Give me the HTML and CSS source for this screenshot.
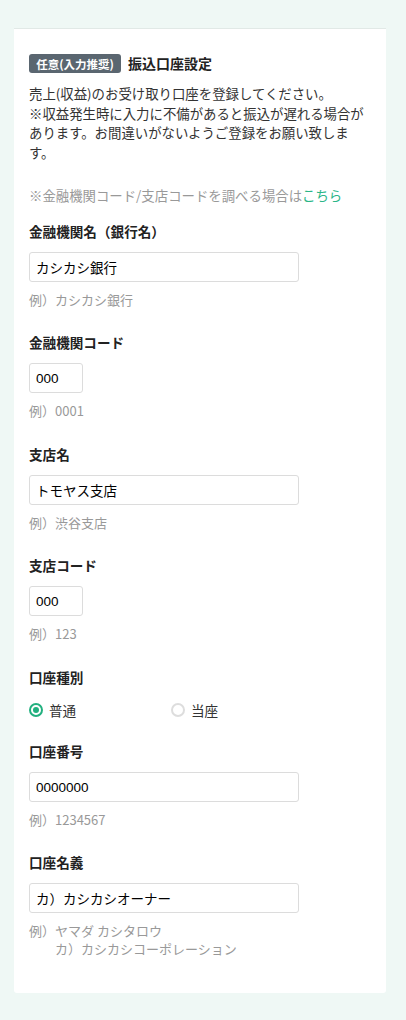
FILE: index.html
```html
<!DOCTYPE html>
<html lang="ja">
<head>
<meta charset="utf-8">
<title>振込口座設定</title>
<link rel="stylesheet" href="styles.css">
</head>
<body>
<div class="page">
  <section class="card">
    <div class="header">
      <span class="badge">任意(入力推奨)</span>
      <h2 class="title">振込口座設定</h2>
    </div>
    <p class="desc">売上(収益)のお受け取り口座を登録してください。<br>※収益発生時に入力に不備があると振込が遅れる場合があります。お間違いがないようご登録をお願い致します。</p>
    <p class="note">※金融機関コード/支店コードを調べる場合は<a class="link" href="#">こちら</a></p>

    <div class="field first">
      <div class="label">金融機関名（銀行名）</div>
      <input class="input wide" type="text" value="カシカシ銀行">
      <div class="hint">例）カシカシ銀行</div>
    </div>
    <div class="field">
      <div class="label">金融機関コード</div>
      <input class="input short" type="text" value="000">
      <div class="hint">例）0001</div>
    </div>
    <div class="field">
      <div class="label">支店名</div>
      <input class="input wide" type="text" value="トモヤス支店">
      <div class="hint">例）渋谷支店</div>
    </div>
    <div class="field">
      <div class="label">支店コード</div>
      <input class="input short" type="text" value="000">
      <div class="hint">例）123</div>
    </div>
    <div class="field radio-field">
      <div class="label">口座種別</div>
      <div class="radios">
        <label class="radio"><span class="dot checked"></span><span class="rtext">普通</span></label>
        <label class="radio"><span class="dot"></span><span class="rtext">当座</span></label>
      </div>
    </div>
    <div class="field">
      <div class="label">口座番号</div>
      <input class="input wide" type="text" value="0000000">
      <div class="hint">例）1234567</div>
    </div>
    <div class="field">
      <div class="label">口座名義</div>
      <input class="input wide" type="text" value="カ）カシカシオーナー">
      <div class="hint">例）ヤマダ カシタロウ</div>
      <div class="hint indent">カ）カシカシコーポレーション</div>
    </div>
  </section>
</div>
</body>
</html>
```

FILE: styles.css
```css
html, body {
  margin: 0;
  padding: 0;
}
body {
  background: #eff8f5;
  font-family: "Noto Sans CJK JP", "Noto Sans", sans-serif;
  color: #333;
}
.page {
  padding: 28px 20px 28px 14px;
}
.card {
  width: 342px;
  background: #fff;
  border-top: 1px solid #e1e9e6;
  border-radius: 0 0 3px 3px;
  padding: 25px 15px 35px 15px;
}
.header {
  display: flex;
  align-items: center;
  gap: 7px;
  height: 19px;
}
.badge {
  display: inline-flex;
  align-items: center;
  justify-content: center;
  height: 19px;
  width: 92px;
  box-sizing: border-box;
  background: #5a6670;
  color: #fff;
  border-radius: 3px;
  font-size: 11.5px;
  font-weight: 700;
}
.title {
  margin: 0;
  font-size: 14px;
  font-weight: 700;
  color: #222;
  line-height: 19px;
}
.desc {
  margin: 11px 0 0;
  font-size: 13.4px;
  line-height: 19.5px;
  color: #333;
}
.note {
  margin: 24px 0 0;
  font-size: 13.4px;
  line-height: 18px;
  color: #999;
}
.link {
  color: #2bb688;
  text-decoration: none;
}
.field {
  margin-top: 23.4px;
}
.field.first {
  margin-top: 17px;
}
.label {
  font-size: 13.6px;
  font-weight: 700;
  line-height: 20px;
  color: #222;
}
.input {
  display: block;
  margin-top: 11px;
  height: 30px;
  box-sizing: border-box;
  border: 1px solid #dcdcdc;
  border-radius: 3px;
  padding: 0 6px;
  font-family: "Liberation Sans", "Noto Sans CJK JP", sans-serif;
  font-size: 13.5px;
  color: #000;
  background: #fff;
  outline: none;
}
.input.wide {
  width: 270px;
}
.input.short {
  width: 54px;
}
.hint {
  margin-top: 9px;
  font-size: 13px;
  line-height: 18px;
  color: #999;
}
.hint.indent {
  margin-top: 0;
  padding-left: 26px;
}
.radio-field + .field {
  margin-top: 21.5px;
}
.radios {
  display: grid;
  grid-template-columns: 142px 142px;
  margin-top: 13px;
  height: 20px;
}
.radio {
  display: flex;
  align-items: center;
  gap: 6px;
  font-size: 13.6px;
  color: #333;
}
.dot {
  width: 14px;
  height: 14px;
  box-sizing: border-box;
  border: 2px solid #dddddd;
  border-radius: 50%;
  display: inline-flex;
  align-items: center;
  justify-content: center;
}
.dot.checked {
  border-color: #22b07f;
}
.dot.checked::after {
  content: "";
  width: 6px;
  height: 6px;
  border-radius: 50%;
  background: #22b07f;
}
.rtext {
  line-height: 20px;
}
```
